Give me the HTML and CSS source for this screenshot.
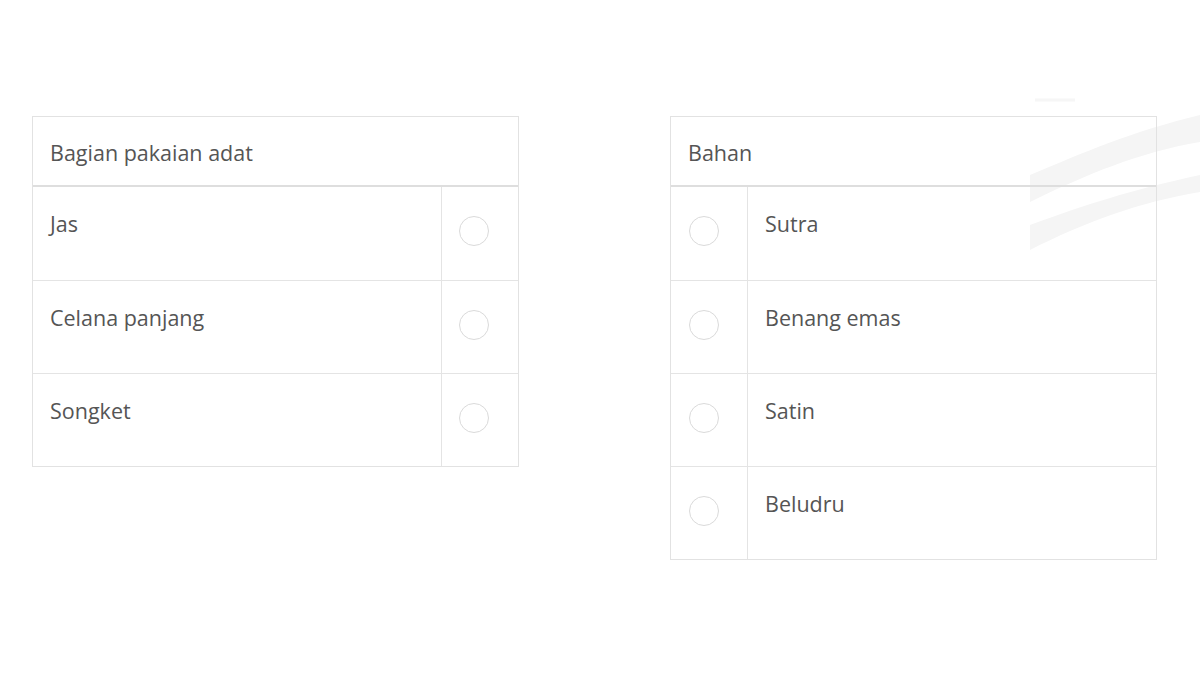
FILE: index.html
```html
<!DOCTYPE html>
<html>
<head>
<meta charset="utf-8">
<link rel="stylesheet" href="styles.css">
</head>
<body>
<svg class="watermark" width="185" height="170" viewBox="0 0 185 170">
  <path d="M15 85 C70 62 115 42 185 25 L185 52 C125 62 70 85 15 112 Z" fill="#f5f5f5"/>
  <path d="M15 135 C70 115 115 100 185 85 L185 102 C125 112 70 132 15 160 Z" fill="#f5f5f5"/>
  <path d="M20 10 L60 10" stroke="#f6f6f6" stroke-width="3"/>
</svg>
<div class="page">
  <div class="card card-left">
    <div class="head">Bagian pakaian adat</div>
    <div class="row"><div class="label">Jas</div><div class="opt"><span class="radio"></span></div></div>
    <div class="row"><div class="label">Celana panjang</div><div class="opt"><span class="radio"></span></div></div>
    <div class="row"><div class="label">Songket</div><div class="opt"><span class="radio"></span></div></div>
  </div>
  <div class="card card-right">
    <div class="head">Bahan</div>
    <div class="row"><div class="opt"><span class="radio"></span></div><div class="label">Sutra</div></div>
    <div class="row"><div class="opt"><span class="radio"></span></div><div class="label">Benang emas</div></div>
    <div class="row"><div class="opt"><span class="radio"></span></div><div class="label">Satin</div></div>
    <div class="row"><div class="opt"><span class="radio"></span></div><div class="label">Beludru</div></div>
  </div>
</div>
</body>
</html>
```
FILE: styles.css
```css
html, body {
  margin: 0;
  padding: 0;
  background: #ffffff;
}
body {
  font-family: "Open Sans", "Noto Sans", sans-serif;
  color: #555555;
  position: relative;
  width: 1200px;
  height: 675px;
  overflow: hidden;
}
.watermark {
  position: absolute;
  left: 1015px;
  top: 90px;
}
.page {
  display: flex;
  align-items: flex-start;
  gap: 151px;
  padding: 116px 0 0 32px;
  position: relative;
}
.card {
  width: 485px;
  border: 1px solid #e2e2e2;
}
.head {
  display: flex;
  align-items: center;
  padding: 2px 17px 0;
  box-sizing: border-box;
  height: 70px;
  border-bottom: 2px solid #dedede;
  font-size: 21.5px;
}
.row {
  display: flex;
  height: 92px;
  border-top: 1px solid #e4e4e4;
}
.head + .row {
  border-top: none;
  height: 93px;
}
.label {
  flex: 1;
  padding: 22px 17px 0;
  font-size: 21.5px;
}
.opt {
  width: 77px;
  flex: none;
  padding: 29px 0 0 17px;
  box-sizing: border-box;
}
.card-left .opt {
  border-left: 1px solid #e4e4e4;
}
.card-right .opt {
  border-right: 1px solid #e4e4e4;
  padding-left: 18px;
}
.radio {
  display: block;
  width: 28px;
  height: 28px;
  border: 1.5px solid #dadada;
  border-radius: 50%;
}
```
